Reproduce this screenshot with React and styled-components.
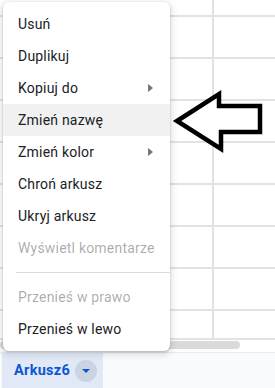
import styled, { createGlobalStyle } from "styled-components";

const Global = createGlobalStyle`
html, body {margin:0; padding:0; background:#fff; overflow:hidden;}
body {font-family: Roboto, "Liberation Sans", sans-serif;}
`;

const Page = styled.div`
position: relative;
width: 275px;
height: 388px;
display: flex;
flex-direction: column;
overflow: hidden;
`;

const Grid = styled.div`
height: 338px;
background:
    linear-gradient(#e2e2e2, #e2e2e2) 212px 0 / 2px 100% no-repeat,
    linear-gradient(to bottom, #e2e2e2 0 2px, transparent 2px) 0 15px / 100% 42px repeat-y;
`;

const Track = styled.div`
height: 12px;
border-top: 2px solid #e2e2e2;
background: #fff;
`;

const Thumb = styled.div`
width: 240px;
height: 8px;
margin-top: 1px;
border-radius: 4px;
background: #dadada;
`;

const Footer = styled.div`
height: 35px;
border-top: 1px solid #e8eaed;
background: #f9fbfd;
display: flex;
padding-left: 2px;
`;

const Tab = styled.div`
width: 101px;
display: flex;
align-items: center;
gap: 5px;
padding-left: 12px;
box-sizing: border-box;
background: #e1e9f7;
color: #0b57d0;
font-size: 14.5px;
font-weight: 700;
letter-spacing: 0.3px;
`;

const Drop = styled.div`
width: 22px;
height: 22px;
border-radius: 50%;
background: #cbd4e3;
display: flex;
align-items: center;
justify-content: center;

&::after {
    content: "";
    border-top: 4px solid #0b57d0;
    border-left: 4px solid transparent;
    border-right: 4px solid transparent;
}
`;

const Menu = styled.div`
position: absolute;
left: 3px;
top: 2px;
width: 167px;
padding: 6px 0;
background: #fff;
border-radius: 6px;
box-shadow: 0 2px 6px 2px rgba(60,64,67,.15), 0 1px 2px rgba(60,64,67,.3);
`;

const Item = styled.div`
height: 32px;
display: flex;
align-items: center;
justify-content: space-between;
padding: 0 17px 0 15px;
font-size: 14px;
letter-spacing: 0.2px;
white-space: nowrap;
color: ${p => p.$disabled ? "rgba(32,33,36,.38)" : "#202124"};
background: ${p => p.$active ? "#f1f1f1" : "transparent"};
`;

const Sub = styled.span`
width: 0;
height: 0;
border-left: 5px solid #757575;
border-top: 4px solid transparent;
border-bottom: 4px solid transparent;
`;

const Sep = styled.div`
height: 1px;
margin: 8px 0 8px 13px;
background: #dadce0;
`;

const Arrow = styled.svg`
position: absolute;
left: 170px;
top: 86px;
`;

const items = [
    { label: "Usuń" },
    { label: "Duplikuj" },
    { label: "Kopiuj do", sub: true },
    { label: "Zmień nazwę", active: true },
    { label: "Zmień kolor", sub: true },
    { label: "Chroń arkusz" },
    { label: "Ukryj arkusz" },
    { label: "Wyświetl komentarze", disabled: true },
];

export default function App() {
    return <Page>
        <Global />
        <Grid />
        <Track><Thumb /></Track>
        <Footer>
            <Tab>Arkusz6<Drop /></Tab>
        </Footer>
        <Menu>
            {items.map(it =>
                <Item key={it.label} $active={it.active} $disabled={it.disabled}>
                    {it.label}{it.sub && <Sub />}
                </Item>)}
            <Sep />
            <Item $disabled>Przenieś w prawo</Item>
            <Item>Przenieś w lewo</Item>
        </Menu>
        <Arrow width="96" height="70" viewBox="0 0 96 70">
            <polygon points="7,35 49,8 49,20 90,20 90,46 51,46 51,63"
                fill="#fff" stroke="#000" strokeWidth="4.5" strokeLinejoin="miter" />
        </Arrow>
    </Page>
}
